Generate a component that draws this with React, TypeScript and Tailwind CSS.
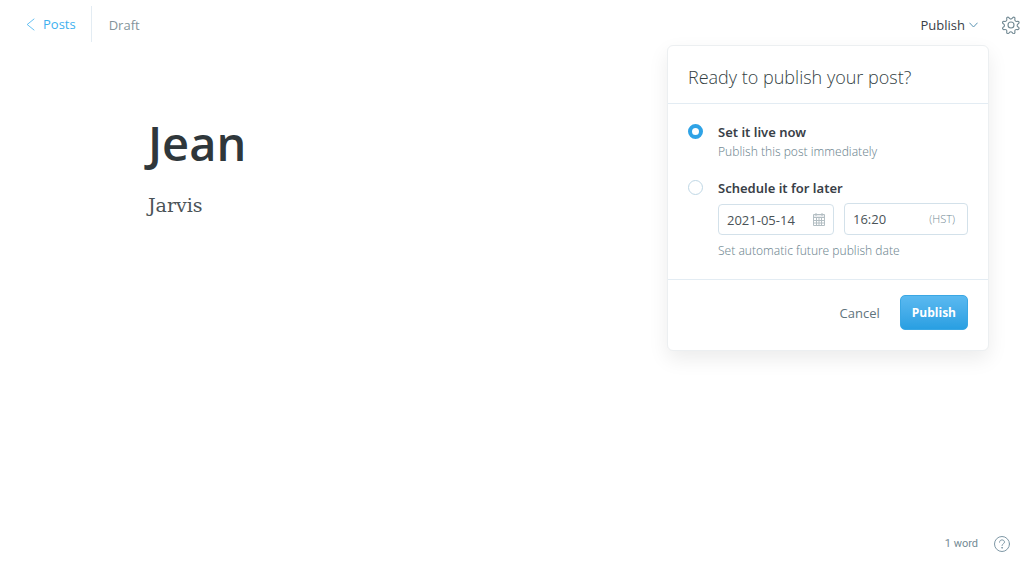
import { useState } from "react";

const sans = "font-['Open_Sans','Noto_Sans',sans-serif]";

function ChevronLeft() {
  return (
    <svg width="9" height="13" viewBox="0 0 9 13" fill="none" stroke="#3eb0ef" strokeWidth=".8" strokeLinecap="round" strokeLinejoin="round" aria-hidden="true">
      <path d="M8 1 1.2 6.5 8 12" />
    </svg>
  );
}

function ChevronDown() {
  return (
    <svg width="9" height="6" viewBox="0 0 9 6" fill="none" stroke="#5b94b3" strokeWidth="1" strokeLinecap="round" strokeLinejoin="round" aria-hidden="true">
      <path d="M.7 1 4.5 5 8.3 1" />
    </svg>
  );
}

function GearIcon() {
  return (
    <svg width="18" height="18" viewBox="0 0 24 24" fill="none" stroke="#738a94" strokeWidth="1.5" strokeLinejoin="round" aria-hidden="true">
      <circle cx="12" cy="12" r="4" />
      <path transform="rotate(22.5 12 12)" d="M13.55 2.02a1.62 1.62 0 0 0-3.1 0l-.41 1.37a2.23 2.23 0 0 1-3.2 1.33l-1.26-.69a1.62 1.62 0 0 0-2.2 2.2l.7 1.26a2.23 2.23 0 0 1-1.34 3.2l-1.37.4a1.62 1.62 0 0 0 0 3.1l1.37.41a2.23 2.23 0 0 1 1.33 3.2l-.69 1.27a1.62 1.62 0 0 0 2.2 2.19l1.26-.69a2.23 2.23 0 0 1 3.2 1.33l.41 1.37a1.62 1.62 0 0 0 3.1 0l.4-1.37a2.23 2.23 0 0 1 3.2-1.33l1.27.69a1.62 1.62 0 0 0 2.19-2.19l-.69-1.27a2.23 2.23 0 0 1 1.33-3.2l1.37-.4a1.62 1.62 0 0 0 0-3.1l-1.37-.41a2.23 2.23 0 0 1-1.33-3.2l.69-1.26a1.62 1.62 0 0 0-2.19-2.2l-1.27.7a2.23 2.23 0 0 1-3.2-1.34z" />
    </svg>
  );
}

function CalendarIcon() {
  return (
    <svg width="12" height="13" viewBox="0 0 12 13" fill="none" stroke="#b3bec3" strokeWidth="1" className="shrink-0" aria-hidden="true">
      <path d="M.5 1.5h11v11H.5zM.5 4.5h11" />
      <path d="M.5 7.5h11M.5 10h11M3.5 4.5v8M6 4.5v8M8.5 4.5v8" />
      <path d="M3 0v3M9 0v3" />
      <path d="M1 3h10" strokeOpacity=".5" />
    </svg>
  );
}

function HelpIcon() {
  return (
    <svg width="16" height="16" viewBox="0 0 16 16" fill="none" stroke="#7f98a6" strokeWidth="1" strokeLinecap="round" aria-hidden="true">
      <circle cx="8" cy="8" r="7.5" />
      <path d="M5.5 6.2c0-1.4 1.1-2.3 2.5-2.3s2.5.9 2.5 2.2c0 1.7-2.5 1.7-2.5 3.4" />
      <circle cx="8" cy="11.8" r=".35" fill="#7f98a6" />
    </svg>
  );
}

const radio =
  "size-[15px] shrink-0 appearance-none rounded-full border border-[#bfd7e5] bg-white checked:border-4 checked:border-[#2fa3e6]";
const optionTitle = "font-['Noto_Sans','Open_Sans',sans-serif] text-[13px] leading-4 font-semibold text-[#394047]";
const optionHint = "font-['Noto_Sans','Open_Sans',sans-serif] text-[12px] leading-4 font-light text-[#738a94]";
const field = "w-full min-w-0 text-[13px] leading-4 text-[#4a5357] outline-none";

function PublishMenu() {
  const [mode, setMode] = useState("now");
  return (
    <form
      onSubmit={(e) => e.preventDefault()}
      className="absolute top-[45px] right-[45px] z-10 w-[322px] rounded-md border border-[#eceff1] bg-white shadow-[0_8px_20px_rgba(0,0,0,0.08)]"
    >
      <h2 className="border-b border-[#e3ecf3] px-5 pt-[19px] pb-[13px] text-[18px] leading-[25px] font-light text-[#343f44]">
        Ready to publish your post?
      </h2>
      <div className="px-5 pt-5 pb-5">
        <div className="flex gap-[15px]">
          <input type="radio" id="now" name="when" checked={mode === "now"} onChange={() => setMode("now")} className={radio} />
          <div className="flex flex-col">
            <label htmlFor="now" className={optionTitle}>Set it live now</label>
            <p className={`pt-1 ${optionHint}`}>Publish this post immediately</p>
          </div>
        </div>
        <div className="flex gap-[15px] pt-5">
          <input type="radio" id="later" name="when" checked={mode === "later"} onChange={() => setMode("later")} className={radio} />
          <div className="flex grow flex-col">
            <label htmlFor="later" className={optionTitle}>Schedule it for later</label>
            <div className="flex items-end gap-[10px] pt-[7px]">
              <div className="flex h-[31px] w-[116px] shrink-0 items-center rounded border border-[#d3e1ea] px-2">
                <input aria-label="Publish date" defaultValue="2021-05-14" className={field} />
                <CalendarIcon />
              </div>
              <div className="flex h-8 min-w-0 flex-1 items-center rounded border border-[#d3e1ea] pr-3 pl-2">
                <input aria-label="Publish time" defaultValue="16:20" className={field} />
                <span className="text-[11px] leading-4 font-light text-[#738a94]">(HST)</span>
              </div>
            </div>
            <p className={`pt-2 ${optionHint}`}>Set automatic future publish date</p>
          </div>
        </div>
      </div>
      <div className="flex items-center justify-end gap-5 border-t border-[#e3ecf3] px-5 pt-[15px] pb-5">
        <button type="button" className="text-[13px] leading-5 text-[#5f747d]">Cancel</button>
        <button type="submit" className="h-[35px] rounded-[5px] border border-[#3aa7e4] bg-linear-to-b from-[#5ab9f0] to-[#289fe2] px-[11px] text-[12px] leading-5 font-bold text-white">
          Publish
        </button>
      </div>
    </form>
  );
}

export default function App() {
  return (
    <div className={`relative flex min-h-screen flex-col bg-white ${sans}`}>
      <header className="flex h-12 items-center justify-between pr-[14px] pl-[26px]">
        <div className="flex items-center">
          <a href="#posts" className="flex items-center gap-2 text-[13px] leading-5 text-[#3eb0ef]">
            <ChevronLeft />
            Posts
          </a>
          <span className="ml-[15px] flex h-9 items-center border-l border-[#e3ecf3] pt-[2px] pl-[17px] text-[13px] leading-5 text-[#84949b]">Draft</span>
        </div>
        <div className="flex items-center gap-6 pt-[1px]">
          <button type="button" className="flex items-center gap-1 text-[13px] leading-5 text-[#394047]">
            Publish
            <ChevronDown />
          </button>
          <button type="button" aria-label="Settings">
            <GearIcon />
          </button>
        </div>
      </header>
      <PublishMenu />
      <main className="flex grow flex-col px-[143px] pt-[61px]">
        <input aria-label="Post title" defaultValue="Jean" className="w-full indent-[5px] text-[47px] leading-[68px] font-semibold text-[#2f373b] outline-none" />
        <textarea
          aria-label="Post body"
          rows={1}
          defaultValue="Jarvis"
          className="mt-3 w-full resize-none overflow-hidden indent-[5px] font-['DejaVu_Serif',serif] text-[19px] leading-8 text-[#4a5357] outline-none"
        />
      </main>
      <footer className="flex items-center justify-end gap-4 pr-6 pb-6">
        <span className="font-['Roboto','Open_Sans',sans-serif] text-[11px] leading-4 text-[#738a94]">1 word</span>
        <button type="button" aria-label="Help">
          <HelpIcon />
        </button>
      </footer>
    </div>
  );
}
